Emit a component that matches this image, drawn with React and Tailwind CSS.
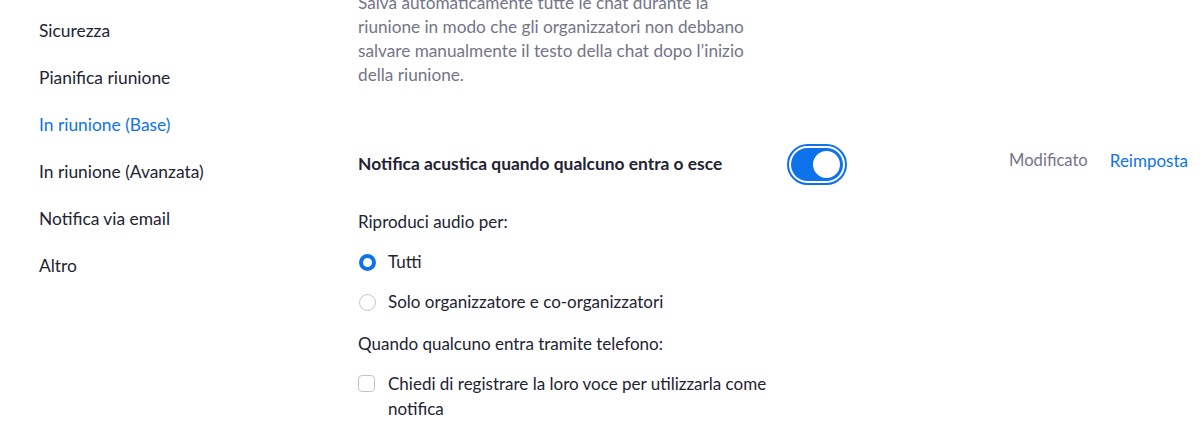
import React from "react";

const navItems = [
  { label: "Sicurezza" },
  { label: "Pianifica riunione" },
  { label: "In riunione (Base)", active: true },
  { label: "In riunione (Avanzata)" },
  { label: "Notifica via email" },
  { label: "Altro" },
];

// toggle, switched on
const Toggle = () => (
  <div className="w-[60px] h-[41px] rounded-full border-2 border-[#0e72ed] p-[2px] bg-white">
    <div className="w-full h-full rounded-full bg-[#0e72ed] flex items-center justify-end pr-[3px]">
      <div className="w-[27px] h-[27px] rounded-full bg-white" />
    </div>
  </div>
);

const Radio = ({ checked, children }) => (
  <div className="flex items-center gap-[12px] h-[24px]">
    {checked ? (
      <span className="w-[17px] h-[17px] rounded-full border-[4px] border-[#0e72ed] bg-white ml-px" />
    ) : (
      <span className="w-[17px] h-[17px] rounded-full border border-[#c3c3cc] bg-white ml-px" />
    )}
    <span className="text-[#232333]">{children}</span>
  </div>
);

export default function App() {
  return (
    <div className="w-[1200px] h-[430px] overflow-hidden bg-white flex font-['Lato','Liberation_Sans',sans-serif] text-[17px] antialiased">
      {/* Sidebar */}
      <nav className="w-[358px] shrink-0 pl-[39px] pt-[7px] flex flex-col text-[17.4px]">
        {navItems.map((item) => (
          <div
            key={item.label}
            className={`h-[47.2px] flex items-center ${item.active ? "text-[#0e72ed]" : "text-[#232333]"}`}
          >
            {item.label}
          </div>
        ))}
      </nav>

      {/* Settings */}
      <main className="flex-1 pr-[12px] flex flex-col">
        <p className="-mt-[9px] w-[400px] leading-[24px] text-[#747487] text-[17.2px]">
          Salva automaticamente tutte le chat durante la riunione in modo che gli organizzatori non debbano
          salvare manualmente il testo della chat dopo l’inizio della riunione.
        </p>

        <div className="mt-[57px] flex items-center">
          <div className="w-[429px] font-bold text-[#232333] text-[17.4px]">
            Notifica acustica quando qualcuno entra o esce
          </div>
          <Toggle />
          <div className="flex-1" />
          <div className="flex items-center gap-[22px] mb-[8px]">
            <span className="text-[#747487] text-[16.6px]">Modificato</span>
            <button className="text-[#0e72ed]">Reimposta</button>
          </div>
        </div>

        <div className="mt-[25px] h-[24px] leading-[24px] text-[#232333]">Riproduci audio per:</div>
        <div className="mt-[16px]">
          <Radio checked>Tutti</Radio>
        </div>
        <div className="mt-[16px]">
          <Radio>Solo organizzatore e co-organizzatori</Radio>
        </div>

        <div className="mt-[18px] h-[24px] leading-[24px] text-[#232333]">
          Quando qualcuno entra tramite telefono:
        </div>
        <div className="mt-[15px] flex items-start gap-[13px]">
          <span className="mt-[4px] w-[17px] h-[17px] shrink-0 rounded-[4px] border border-[#c3c3cc] bg-white" />
          <span className="w-[400px] leading-[25px] text-[#232333]">
            Chiedi di registrare la loro voce per utilizzarla come notifica
          </span>
        </div>
      </main>
    </div>
  );
}
